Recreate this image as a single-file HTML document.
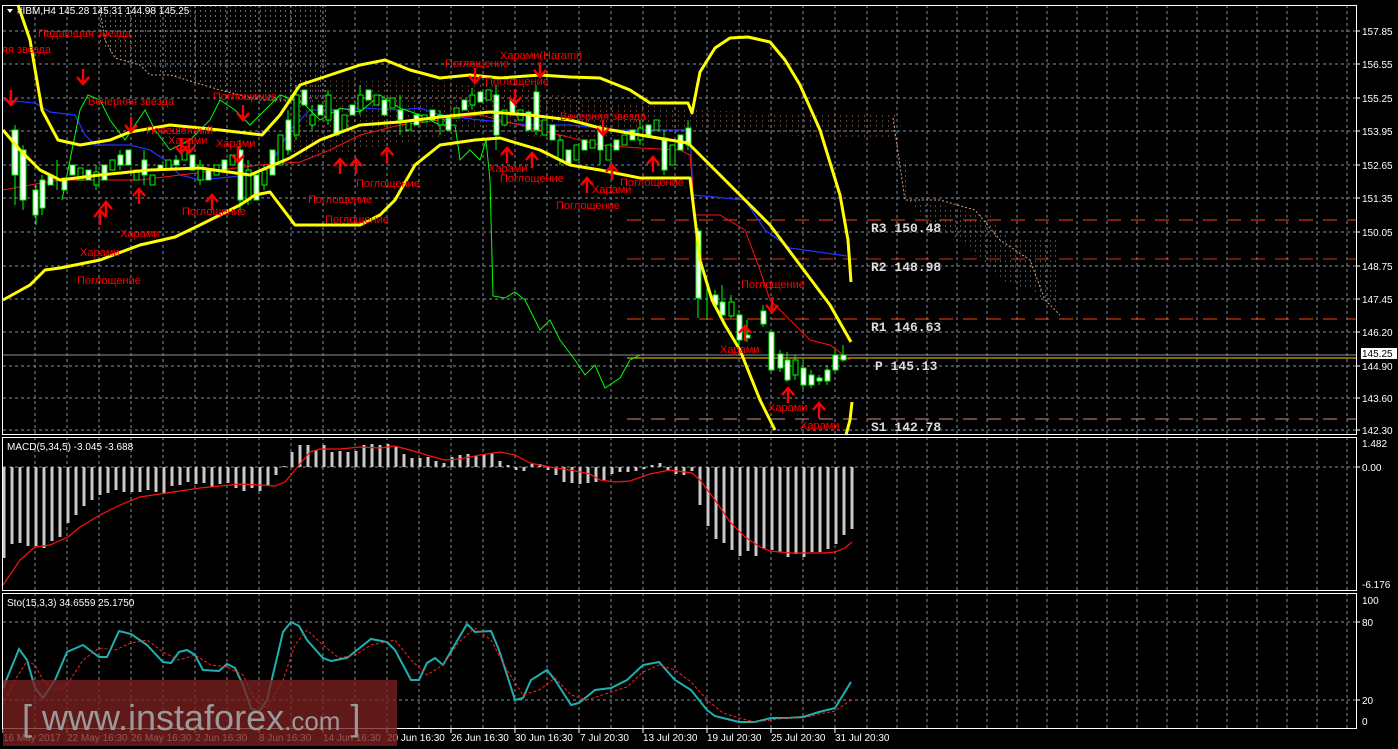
<!DOCTYPE html>
<html><head><meta charset="utf-8"><style>
html,body{margin:0;padding:0;background:#000;}
svg{display:block;}
text{font-family:"Liberation Sans",sans-serif;}
.ax{fill:#fff;font-size:10px;}
.lb{fill:#ff0000;font-size:11px;}
.pv{fill:#ddd;font-size:13px;font-family:"Liberation Mono",monospace;font-weight:bold;}
</style></head><body>
<svg width="1398" height="749" viewBox="0 0 1398 749" xmlns="http://www.w3.org/2000/svg">
<defs>
<pattern id="vd" width="5" height="5" patternUnits="userSpaceOnUse"><rect x="0" y="0" width="1" height="2" fill="#aaa"/></pattern>
<pattern id="vo" width="6" height="5" patternUnits="userSpaceOnUse"><rect x="0" y="0" width="1" height="2" fill="#c08060"/></pattern>
<g id="dn"><path d="M0 -8V6M-6 0L0 7L6 0" fill="none" stroke="#ff0000" stroke-width="2.4"/></g>
<g id="up"><path d="M0 8V-6M-6 0L0 -7L6 0" fill="none" stroke="#ff0000" stroke-width="2.4"/></g>
</defs>
<rect width="1398" height="749" fill="#000"/>
<!-- grid -->
<g stroke="#8090a0" stroke-width="1" stroke-dasharray="3,3" fill="none">
<path d="M3 31H1356M3 64H1356M3 98H1356M3 131H1356M3 165H1356M3 198H1356M3 232H1356M3 266H1356M3 299H1356M3 332H1356M3 366H1356M3 398H1356M3 430H1356"/>
<path d="M3 467H1356M3 622H1356M3 700H1356"/>
<path d="M35 5V728M67 5V728M99 5V728M131 5V728M163 5V728M195 5V728M227 5V728M259 5V728M291 5V728M323 5V728M355 5V728M387 5V728M419 5V728M451 5V728M483 5V728M515 5V728M547 5V728M579 5V728M611 5V728M643 5V728M675 5V728M707 5V728M739 5V728M771 5V728M803 5V728M835 5V728M867 5V728M897 5V728M927 5V728M957 5V728M987 5V728M1017 5V728M1047 5V728M1077 5V728M1107 5V728M1137 5V728M1167 5V728M1197 5V728M1227 5V728M1257 5V728M1287 5V728M1317 5V728M1347 5V728"/>
</g>
<!-- ichimoku cloud -->
<polygon points="100,5 330,5 330,95 300,105 260,100 220,90 170,75 140,65 120,60 100,45" fill="url(#vd)" opacity="0.6"/>
<polyline points="100,10 105,40 115,58 140,65 150,75 170,75 220,90 260,100 300,100" fill="none" stroke="#e0a070" stroke-dasharray="2,2"/>
<polygon points="300,80 480,82 560,95 690,110 860,115 900,115 900,140 860,140 700,130 560,140 480,130 300,160 280,145" fill="url(#vo)" opacity="0.5"/>
<polygon points="900,118 910,200 940,205 960,210 990,215 1010,240 1020,238 1060,240 1060,310 1030,290 1000,280 990,270 960,240 920,215 905,200" fill="url(#vd)" opacity="0.45"/>
<polyline points="893,118 905,200 940,200 975,210 1000,240 1030,260 1045,300 1060,315" fill="none" stroke="#e0a070" stroke-dasharray="2,2"/>
<!-- pivot lines -->
<g stroke-width="1" fill="none">
<path d="M627 220H1356" stroke="#ff4010" stroke-dasharray="14,10"/>
<path d="M627 259H1356" stroke="#ff4010" stroke-dasharray="14,10" opacity="0.8"/>
<path d="M627 319H1356" stroke="#ff4010" stroke-dasharray="14,10"/>
<path d="M627 419H1356" stroke="#d09080" stroke-dasharray="14,10"/>
<path d="M3 355H1356" stroke="#909090"/>
<path d="M627 358H1356" stroke="#ffd000"/>
</g>
<text class="pv" x="871" y="232">R3 150.48</text>
<text class="pv" x="871" y="271">R2 148.98</text>
<text class="pv" x="871" y="331">R1 146.63</text>
<text class="pv" x="875" y="370">P 145.13</text>
<text class="pv" x="871" y="431">S1 142.78</text>
<!-- blue / red lines -->
<polyline points="3,100 35,103 50,112 75,115 85,135 95,145 130,145 150,150 165,160 180,175 200,180 250,175 270,165 290,130 310,110 330,110 360,108 400,110 420,108 440,115 480,120 530,125 570,125 620,130 690,130 693,195 745,200 765,230 790,248 847,256" fill="none" stroke="#2030ff" stroke-width="1.3"/>
<polyline points="3,190 30,185 60,180 100,180 140,180 180,175 220,170 260,165 300,162 330,150 360,135 400,125 440,120 480,115 520,125 560,135 600,145 640,148 680,150 690,155 695,215 720,215 745,230 760,270 770,300 790,320 810,340 830,345 850,360" fill="none" stroke="#ff1010" stroke-width="1"/>
<!-- green line -->
<polyline points="62,200 70,160 80,110 88,95 100,100 110,120 125,140 135,125 145,110 155,130 170,150 190,140 210,120 220,100 235,110 250,125 265,110 280,95 295,100 305,105 320,120 340,108 360,112 380,95 400,108 420,115 440,125 455,125 460,160 470,150 480,160 486,140 490,180 493,296 505,298 515,292 525,300 540,330 550,320 560,340 575,360 585,375 595,365 605,388 620,378 630,360 640,355" fill="none" stroke="#00ff00" stroke-width="1"/>
<!-- candles -->
<g stroke="#00ff00" stroke-width="1">
<path d="M15 125V205M23 145V210M36 185V225M42 175V215M57 160V190M96 165V190M120 150V170M144 150V185M176 155V170M200 160V185M240 140V210M248 160V205M264 165V190M288 110V155M296 85V140M312 105V130M328 90V125M360 85V115M400 95V135M440 110V135M472 88V110M496 85V150M536 85V135M560 135V165M600 125V165M640 120V145M664 130V175M688 120V150M698 228V318M707 280V320M715 290V308M722 285V318M731 295V318M739 310V345M747 320V342M763 305V327M771 330V372M780 350V372M787 352V382M795 355V380M803 360V390M811 370V388M819 375V385M827 365V385M835 350V372M843 345V362"/>
</g>
<g stroke="#00ff00" stroke-width="1" fill="#fff">
<rect x="12" y="130" width="6" height="45"/><rect x="20" y="150" width="6" height="50"/><rect x="33" y="190" width="5" height="25"/><rect x="40" y="180" width="5" height="28"/><rect x="48" y="175" width="5" height="10"/><rect x="62" y="178" width="5" height="12"/><rect x="70" y="165" width="5" height="10"/><rect x="86" y="170" width="5" height="10"/><rect x="102" y="165" width="5" height="15"/><rect x="118" y="155" width="5" height="10"/><rect x="126" y="150" width="5" height="15"/><rect x="142" y="160" width="5" height="15"/><rect x="158" y="165" width="5" height="5"/><rect x="174" y="160" width="5" height="5"/><rect x="190" y="155" width="5" height="15"/><rect x="206" y="170" width="5" height="10"/><rect x="222" y="160" width="5" height="10"/><rect x="238" y="150" width="5" height="50"/><rect x="254" y="175" width="5" height="25"/><rect x="270" y="150" width="5" height="25"/><rect x="286" y="120" width="5" height="30"/><rect x="302" y="90" width="5" height="15"/><rect x="318" y="105" width="5" height="10"/><rect x="334" y="110" width="5" height="25"/><rect x="350" y="105" width="5" height="10"/><rect x="366" y="90" width="5" height="10"/><rect x="382" y="100" width="5" height="15"/><rect x="398" y="110" width="5" height="10"/><rect x="414" y="115" width="5" height="10"/><rect x="430" y="110" width="5" height="10"/><rect x="446" y="118" width="5" height="12"/><rect x="462" y="100" width="5" height="10"/><rect x="478" y="92" width="5" height="10"/><rect x="494" y="95" width="5" height="40"/><rect x="510" y="100" width="5" height="15"/><rect x="526" y="112" width="5" height="18"/><rect x="534" y="92" width="5" height="38"/><rect x="550" y="125" width="5" height="15"/><rect x="566" y="150" width="5" height="15"/><rect x="582" y="140" width="5" height="10"/><rect x="598" y="130" width="5" height="20"/><rect x="614" y="140" width="5" height="10"/><rect x="630" y="130" width="5" height="10"/><rect x="646" y="125" width="5" height="10"/><rect x="662" y="138" width="5" height="32"/><rect x="678" y="135" width="5" height="15"/><rect x="686" y="128" width="5" height="17"/>
<rect x="696" y="231" width="5" height="67"/><rect x="713" y="295" width="5" height="10"/><rect x="720" y="302" width="5" height="13"/><rect x="737" y="315" width="5" height="25"/><rect x="745" y="335" width="5" height="3"/><rect x="761" y="311" width="5" height="13"/><rect x="769" y="332" width="5" height="38"/><rect x="778" y="354" width="5" height="14"/><rect x="785" y="360" width="5" height="20"/><rect x="801" y="368" width="5" height="17"/><rect x="809" y="375" width="5" height="10"/><rect x="817" y="378" width="5" height="3"/><rect x="825" y="370" width="5" height="11"/><rect x="833" y="355" width="5" height="15"/><rect x="841" y="355" width="5" height="5"/>
</g>
<g stroke="#00ff00" stroke-width="1" fill="#000">
<rect x="78" y="168" width="5" height="12"/><rect x="94" y="172" width="5" height="13"/><rect x="110" y="160" width="5" height="10"/><rect x="134" y="170" width="5" height="10"/><rect x="150" y="175" width="5" height="10"/><rect x="166" y="160" width="5" height="10"/><rect x="182" y="150" width="5" height="10"/><rect x="198" y="165" width="5" height="15"/><rect x="214" y="165" width="5" height="10"/><rect x="230" y="155" width="5" height="10"/><rect x="246" y="170" width="5" height="30"/><rect x="262" y="170" width="5" height="15"/><rect x="278" y="135" width="5" height="30"/><rect x="294" y="95" width="5" height="40"/><rect x="310" y="115" width="5" height="10"/><rect x="326" y="95" width="5" height="25"/><rect x="342" y="115" width="5" height="15"/><rect x="358" y="95" width="5" height="15"/><rect x="374" y="95" width="5" height="10"/><rect x="390" y="98" width="5" height="10"/><rect x="406" y="120" width="5" height="10"/><rect x="422" y="115" width="5" height="7"/><rect x="438" y="115" width="5" height="10"/><rect x="454" y="108" width="5" height="10"/><rect x="470" y="95" width="5" height="10"/><rect x="486" y="90" width="5" height="10"/><rect x="502" y="110" width="5" height="15"/><rect x="518" y="110" width="5" height="10"/><rect x="542" y="120" width="5" height="15"/><rect x="558" y="140" width="5" height="20"/><rect x="574" y="145" width="5" height="15"/><rect x="590" y="140" width="5" height="8"/><rect x="606" y="145" width="5" height="15"/><rect x="622" y="135" width="5" height="10"/><rect x="638" y="128" width="5" height="12"/><rect x="654" y="120" width="5" height="10"/><rect x="670" y="145" width="5" height="20"/>
<rect x="729" y="302" width="5" height="14"/><rect x="793" y="360" width="5" height="15"/>
</g>
<!-- yellow bollinger -->
<g fill="none" stroke="#ffff00" stroke-width="3" stroke-linejoin="round">
<polyline points="18,5 30,40 42,110 58,140 80,145 110,140 130,132 170,125 220,130 262,135 280,115 300,85 330,75 360,65 385,60 410,70 440,78 470,75 500,78 540,75 570,77 600,78 630,90 650,103 688,103 692,113 700,72 715,48 730,38 748,37 770,42 785,60 800,85 820,130 840,195 848,240 851,282"/>
<polyline points="3,130 20,150 40,170 60,180 100,175 150,170 200,168 250,175 290,158 320,140 360,125 400,122 440,117 490,112 530,115 570,120 600,128 640,135 688,143 720,175 745,200 770,225 800,265 830,305 851,342"/>
<polyline points="3,300 30,285 45,270 60,268 100,260 140,245 175,237 200,225 240,205 255,195 270,192 295,225 320,225 360,225 380,215 395,200 415,165 440,145 475,140 500,138 540,150 570,165 600,170 640,178 660,178 690,178 700,260 712,300 725,325 740,350 750,375 760,400 775,430"/>
<polyline points="846,435 850,420 852,402"/>
</g>
<!-- labels -->
<g class="lb">
<text x="38" y="37">Падающая звезда</text>
<text x="2" y="53">яя звезда</text>
<text x="88" y="105">Вечерняя звезда</text>
<text x="146" y="134">Повешенный</text>
<text x="168" y="144">Харами</text>
<text x="213" y="100">Поглощение</text>
<text x="216" y="147">Харами</text>
<text x="182" y="215">Поглощение</text>
<text x="120" y="237">Харами</text>
<text x="80" y="256">Харами</text>
<text x="77" y="284">Поглощение</text>
<text x="308" y="203">Поглощение</text>
<text x="325" y="223">Поглощение</text>
<text x="356" y="187">Поглощение</text>
<text x="445" y="67">Поглощение</text>
<text x="485" y="85">Поглощение</text>
<text x="500" y="59">Харами(Harami)</text>
<text x="560" y="120">Вечерняя звезда</text>
<text x="488" y="172">Харами</text>
<text x="500" y="182">Поглощение</text>
<text x="592" y="193">Харами</text>
<text x="620" y="186">Поглощение</text>
<text x="556" y="209">Поглощение</text>
<text x="741" y="288">Поглощение</text>
<text x="720" y="353">Харами</text>
<text x="768" y="411">Харами</text>
<text x="800" y="429">Харами</text>
</g>
<g>
<use href="#dn" x="11" y="98"/><use href="#dn" x="83" y="77"/><use href="#dn" x="131" y="125"/><use href="#dn" x="181" y="146"/><use href="#dn" x="189" y="146"/><use href="#dn" x="238" y="155"/><use href="#dn" x="243" y="113"/>
<use href="#up" x="100" y="217"/><use href="#up" x="139" y="196"/><use href="#up" x="212" y="202"/><use href="#up" x="106" y="209"/><use href="#up" x="340" y="166"/><use href="#up" x="356" y="166"/><use href="#up" x="387" y="155"/>
<use href="#dn" x="475" y="76"/><use href="#dn" x="515" y="97"/><use href="#dn" x="540" y="70"/><use href="#dn" x="603" y="128"/><use href="#up" x="507" y="155"/><use href="#up" x="532" y="160"/><use href="#up" x="587" y="185"/><use href="#up" x="612" y="172"/><use href="#up" x="653" y="164"/>
<use href="#dn" x="772" y="305"/><use href="#up" x="745" y="333"/><use href="#up" x="788" y="395"/><use href="#up" x="819" y="410"/>
</g>
<!-- MACD -->
<g stroke="#c8c8c8" stroke-width="3">
<path d="M4 467V558M12 467V544M20 467V543M28 467V546M36 467V546M44 467V548M52 467V541M60 467V537M68 467V523M76 467V515M84 467V506M92 467V500M100 467V495M108 467V493M116 467V490M124 467V492M132 467V492M140 467V492M148 467V490M156 467V492M164 467V493M172 467V486M180 467V485M188 467V482M196 467V484M204 467V483M212 467V487M220 467V484M228 467V483M236 467V488M244 467V491M252 467V488M260 467V491M268 467V486M276 467V475M284 467V466M292 467V452M300 467V445M308 467V445M316 467V450M324 467V445M332 467V452M340 467V451M348 467V452M356 467V451M364 467V445M372 467V444M380 467V445M388 467V444M396 467V447M404 467V454M412 467V458M420 467V458M428 467V457M436 467V461M444 467V463M452 467V457M460 467V455M468 467V454M476 467V456M484 467V454M492 467V453M500 467V461M508 467V465M516 467V470M524 467V471M532 467V464M540 467V464M548 467V470M556 467V475M564 467V482M572 467V483M580 467V484M588 467V483M596 467V482M604 467V480M612 467V474M620 467V472M628 467V472M636 467V471M644 467V469M652 467V465M660 467V463M668 467V471M676 467V474M684 467V475M692 467V471M700 467V505M708 467V526M716 467V539M724 467V543M732 467V550M740 467V556M748 467V551M756 467V556M764 467V549M772 467V550M780 467V552M788 467V557M796 467V554M804 467V557M812 467V552M820 467V552M828 467V549M836 467V544M844 467V535M852 467V529"/>
</g>
<polyline points="3,585 20,560 35,547 50,545 68,537 80,527 100,515 120,505 140,497 160,494 200,488 240,484 260,485 275,486 285,482 300,464 310,452 320,449 340,449 360,447 380,448 395,446 410,450 430,456 445,460 460,459 480,455 500,452 515,455 530,463 550,467 570,470 590,474 600,480 615,482 630,481 650,474 670,470 692,473 700,480 715,500 730,522 745,537 760,547 770,551 790,553 810,553 825,553 835,552 845,548 852,542" fill="none" stroke="#ff1010" stroke-width="1.2"/>
<!-- Stochastic -->
<polyline points="3,688 19,649 27,660 35,688 43,698 55,680 67,652 83,645 99,657 107,657 119,631 131,634 147,645 163,662 171,663 179,652 187,650 195,655 203,670 219,671 227,664 235,668 243,685 251,708 259,712 267,700 283,632 291,622 299,626 307,640 323,658 331,661 347,658 371,639 387,642 395,650 411,680 419,680 427,663 435,658 443,665 467,624 475,632 491,631 499,650 515,700 523,698 531,680 547,670 555,680 571,705 579,703 595,690 611,688 627,680 643,665 659,662 675,680 691,690 707,710 715,716 723,718 739,722 755,722 771,718 787,718 803,717 819,712 835,708 851,682" fill="none" stroke="#20b0b0" stroke-width="2"/>
<polyline points="3,705 15,680 27,661 35,665 43,680 55,690 67,685 83,660 99,648 115,650 131,643 147,640 163,652 179,660 195,655 211,665 227,667 243,675 255,700 267,708 283,680 295,645 307,630 323,645 339,658 355,655 371,645 395,640 411,660 427,675 443,665 459,642 475,628 491,640 507,670 523,695 539,690 555,678 571,695 587,700 611,692 627,687 643,672 659,665 675,670 691,682 707,700 723,713 739,718 755,722 771,720 787,718 803,718 819,714 835,711 851,700" fill="none" stroke="#ff2020" stroke-width="1" stroke-dasharray="3,2"/>
<!-- panel borders -->
<g fill="none" stroke="#fff" stroke-width="1">
<rect x="2.5" y="5.5" width="1354" height="429"/>
<rect x="2.5" y="437.5" width="1354" height="153"/>
<rect x="2.5" y="593.5" width="1354" height="135"/>
</g>
<!-- axis labels -->
<g class="ax">
<text x="1362" y="35">157.85</text><text x="1362" y="68">156.55</text><text x="1362" y="102">155.25</text><text x="1362" y="135">153.95</text><text x="1362" y="169">152.65</text><text x="1362" y="202">151.35</text><text x="1362" y="236">150.05</text><text x="1362" y="270">148.75</text><text x="1362" y="303">147.45</text><text x="1362" y="336">146.20</text><text x="1362" y="370">144.90</text><text x="1362" y="402">143.60</text><text x="1362" y="434">142.30</text>
<text x="1362" y="447">1.482</text><text x="1362" y="471">0.00</text><text x="1362" y="588">-6.176</text>
<text x="1362" y="604">100</text><text x="1362" y="626">80</text><text x="1362" y="704">20</text><text x="1362" y="725">0</text>
</g>
<rect x="1361" y="348" width="36" height="11" fill="#fff"/>
<text x="1362" y="357" style="fill:#000;font-size:10px;">145.25</text>
<g stroke="#fff"><path d="M1357 31h3M1357 64h3M1357 98h3M1357 131h3M1357 165h3M1357 198h3M1357 232h3M1357 266h3M1357 299h3M1357 332h3M1357 366h3M1357 398h3M1357 430h3M1357 467h3M1357 622h3M1357 700h3"/>
<path d="M3 729v4M67 729v4M131 729v4M195 729v4M259 729v4M323 729v4M387 729v4M451 729v4M515 729v4M579 729v4M643 729v4M707 729v4M771 729v4M835 729v4"/></g>
<g class="ax">
<text x="3" y="741">16 May 2017</text><text x="67" y="741">22 May 16:30</text><text x="131" y="741">26 May 16:30</text><text x="195" y="741">2 Jun 16:30</text><text x="259" y="741">8 Jun 16:30</text><text x="323" y="741">14 Jun 16:30</text><text x="387" y="741">20 Jun 16:30</text><text x="451" y="741">26 Jun 16:30</text><text x="515" y="741">30 Jun 16:30</text><text x="580" y="741">7 Jul 20:30</text><text x="643" y="741">13 Jul 20:30</text><text x="707" y="741">19 Jul 20:30</text><text x="771" y="741">25 Jul 20:30</text><text x="835" y="741">31 Jul 20:30</text>
<text x="7" y="450">MACD(5,34,5) -3.045 -3.688</text>
<text x="7" y="606">Sto(15,3,3) 34.6559 25.1750</text>
</g>
<path d="M7 9l6 0l-3 4z" fill="#fff"/>
<text x="17" y="14" class="ax">#IBM,H4  145.28 145.31 144.98 145.25</text>
<!-- watermark -->
<rect x="3" y="680" width="394" height="66" fill="#7a2020" opacity="0.78"/>
<text x="22" y="730" style="fill:#9a9a9a;font-size:36px;font-family:'Liberation Sans',sans-serif;">[ www.instaforex<tspan style="font-size:26px">.com</tspan> ]</text>
</svg>
</body></html>
